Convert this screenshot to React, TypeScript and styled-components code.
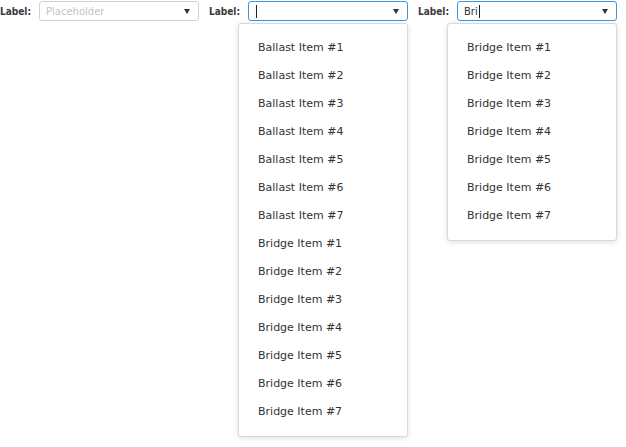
import React from 'react'
import styled, { createGlobalStyle } from 'styled-components'

const GlobalStyle = createGlobalStyle`
  html, body {
    margin: 0;
    padding: 0;
    background: #fff;
  }
  body {
    font-family: 'DejaVu Sans', Verdana, sans-serif;
    color: #333;
  }
`

const Page = styled.div`
  min-height: 100vh;
`
const Row = styled.div`
  display: flex;
  align-items: flex-start;
  padding-top: 1px;
`
const Field = styled.div`
  display: flex;
  align-items: center;
  margin-right: 10px;
`
const Label = styled.label`
  width: 31px;
  font-family: 'DejaVu Sans Condensed', 'DejaVu Sans', sans-serif;
  font-size: 10px;
  font-weight: bold;
  color: #3a3a3a;
  margin-right: 8px;
  white-space: nowrap;
`
const Combo = styled.div<{ $focused?: boolean }>`
  position: relative;
  box-sizing: border-box;
  width: 160px;
  height: 20px;
  display: flex;
  align-items: center;
  padding: 0 6px;
  border: 1px solid ${(p) => (p.$focused ? '#3d95e0' : '#d2d2d2')};
  border-radius: 3px;
  background: #fff;
  font-size: 10px;
`
const Placeholder = styled.span`
  color: #c4c4c4;
`
const Value = styled.span`
  color: #333;
`
const Caret = styled.span`
  display: inline-block;
  width: 1px;
  height: 13px;
  background: #222;
  margin-left: 1px;
`
const Arrow = styled.span`
  margin-left: auto;
  width: 0;
  height: 0;
  border-left: 3.5px solid transparent;
  border-right: 3.5px solid transparent;
  border-top: 5px solid #333;
  margin-right: 2px;
`
const Menu = styled.div`
  position: absolute;
  top: 21px;
  left: -11px;
  right: -1px;
  padding: 10px 0;
  background: #fff;
  border: 1px solid #dadada;
  border-radius: 3px;
  box-shadow: 0 1px 5px rgba(0, 0, 0, 0.13);
  z-index: 2;
`
const Item = styled.div`
  height: 28px;
  line-height: 28px;
  padding-left: 19px;
  font-size: 11px;
  color: #333;
  white-space: nowrap;
`

const ballast = Array.from({ length: 7 }, (_, i) => `Ballast Item #${i + 1}`)
const bridge = Array.from({ length: 7 }, (_, i) => `Bridge Item #${i + 1}`)

const App: React.FC = () => {
  return (
    <Page>
      <GlobalStyle />
      <Row>
        <Field>
          <Label>Label:</Label>
          <Combo>
            <Placeholder>Placeholder</Placeholder>
            <Arrow />
          </Combo>
        </Field>
        <Field>
          <Label>Label:</Label>
          <Combo $focused>
            <Caret />
            <Arrow />
            <Menu>
              {ballast.concat(bridge).map((item) => (
                <Item key={item}>{item}</Item>
              ))}
            </Menu>
          </Combo>
        </Field>
        <Field>
          <Label>Label:</Label>
          <Combo $focused>
            <Value>Bri</Value>
            <Caret />
            <Arrow />
            <Menu>
              {bridge.map((item) => (
                <Item key={item}>{item}</Item>
              ))}
            </Menu>
          </Combo>
        </Field>
      </Row>
    </Page>
  )
}

export default App
